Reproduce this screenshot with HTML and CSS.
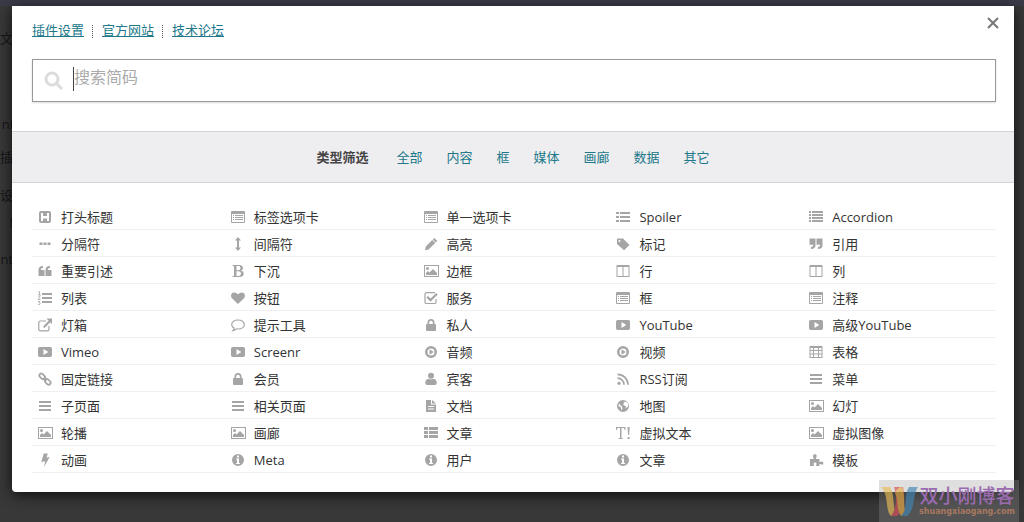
FILE: index.html
```html
<!DOCTYPE html>
<html lang="zh-CN">
<head>
<meta charset="utf-8">
<title>插入简码</title>
<link rel="stylesheet" href="styles.css">
</head>
<body>
<svg class="sprite" aria-hidden="true">
  <symbol id="i-header" viewBox="0 0 16 16"><path fill-rule="evenodd" d="M4 2h8A2 2 0 0 1 14 4v8a2 2 0 0 1-2 2H4A2 2 0 0 1 2 12V4A2 2 0 0 1 4 2zM4 4v8h2V9.500h4V12h2V4h-2v3H6V4z"/></symbol>
  <symbol id="i-listalt" viewBox="0 0 16 16"><path fill-rule="evenodd" d="M2 2h12a1 1 0 0 1 1 1v10a1 1 0 0 1-1 1H2a1 1 0 0 1-1-1V3a1 1 0 0 1 1-1zM2 5v8h12V5zM3 6h1v1H3zM5 6h8v1H5zM3 8h1v1H3zM5 8h8v1H5zM3 10h1v1H3zM5 10h8v1H5z"/></symbol>
  <symbol id="i-listul" viewBox="0 0 16 16"><path d="M1 3h3v2H1zM5 3h10v2H5zM1 7h3v2H1zM5 7h10v2H5zM1 11h3v2H1zM5 11h10v2H5z"/></symbol>
  <symbol id="i-list" viewBox="0 0 16 16"><path d="M1 2h2v2H1zM4 2h11v2H4zM1 5h2v2H1zM4 5h11v2H4zM1 8h2v2H1zM4 8h11v2H4zM1 11h2v2H1zM4 11h11v2H4z"/></symbol>
  <symbol id="i-dots" viewBox="0 0 16 16"><path d="M2.500 6.500h3v2.500h-3zM6.500 6.500h3v2.500h-3zM10.500 6.500h3v2.500h-3z"/></symbol>
  <symbol id="i-updown" viewBox="0 0 16 16"><path d="M8 1l3 3.500H9v7h2L8 15l-3-3.500h2v-7H5z"/></symbol>
  <symbol id="i-pencil" viewBox="0 0 16 16"><path d="M11.300 2l2.900 2.900-1.500 1.500-2.900-2.900zM9.200 4l3 3-6.600 6.500L2 14.200l.8-3.700z"/></symbol>
  <symbol id="i-tag" viewBox="0 0 16 16"><path fill-rule="evenodd" d="M2 2.500h6L14.500 9 9 14.200 2 8zM4.500 3.900a1 1 0 1 0 0 2 1 1 0 0 0 0-2z"/></symbol>
  <symbol id="i-quoter" viewBox="0 0 16 16"><path d="M1.500 2.500h6v6.500c0 2.500-1.500 4-4.500 4v-2c1.500 0 2.200-.6 2.200-2.200H1.500zM8.500 2.500h6v6.500c0 2.500-1.500 4-4.500 4v-2c1.500 0 2.200-.6 2.200-2.200H8.500z"/></symbol>
  <symbol id="i-quotel" viewBox="0 0 16 16"><path d="M7.500 13h-6V7c0-2.500 1.500-4 4.500-4v2c-1.500 0-2.200.6-2.200 2h3.700zM14.500 13h-6V7c0-2.500 1.500-4 4.500-4v2c-1.500 0-2.200.6-2.200 2h3.700z"/></symbol>
  <symbol id="i-bold" viewBox="0 0 16 16"><path fill-rule="evenodd" d="M2.500 2H9c2.500 0 4 1 4 3 0 1.300-.8 2.200-2.300 2.600 1.900.3 3 1.500 3 3.100 0 2.200-1.700 3.300-4.500 3.300H2.500v-.8L4 12.800V3.200l-1.500-.4zM6.500 3v4.200h1.800C9.800 7.200 10.400 6.500 10.400 5S9.800 3 8.300 3zM6.500 8.200V13h1.800c1.800 0 2.600-.8 2.600-2.400S10 8.200 8.300 8.200z"/></symbol>
  <symbol id="i-image" viewBox="0 0 16 16"><path fill-rule="evenodd" d="M1 2h15v12H1zM2 3v10h13V3zM3 12v-2l2-2 1.500 1.500L10 6l4 4v2zM4.500 4a1.500 1.500 0 1 1 0 3 1.500 1.500 0 0 1 0-3z"/></symbol>
  <symbol id="i-columns" viewBox="0 0 16 16"><path fill-rule="evenodd" d="M2 2h12a.5.5 0 0 1 .5.5v11a.5.5 0 0 1-.5.5H2a.5.5 0 0 1-.5-.5v-11A.5.5 0 0 1 2 2zM2.500 4v9h5V4zM8.500 4v9h5V4z"/></symbol>
  <symbol id="i-listol" viewBox="0 0 16 16"><path d="M5 3h10v2H5zM5 7h10v2H5zM5 11h10v2H5z"/><path fill="none" stroke="currentColor" stroke-width=".8" d="M1.500 2l1-.5V5M1 5h3M1.200 7c.5-1 2-.8 1.800.2L1 9.500h2.500M1 11.500h2L2 12.700c2 0 1.500 2.300-1 1.800"/></symbol>
  <symbol id="i-heart" viewBox="0 0 16 16"><path d="M8 14L2 8.200C.2 6.300 1 2.500 4.300 2.500 6 2.500 7.200 3.500 8 4.600c.8-1.100 2-2.100 3.700-2.100 3.300 0 4.100 3.800 2.300 5.700z"/></symbol>
  <symbol id="i-check" viewBox="0 0 16 16"><path fill="none" stroke="currentColor" stroke-width="1.200" d="M13 9v3.200a1.300 1.300 0 0 1-1.300 1.300H3.300A1.300 1.300 0 0 1 2 12.200V4a1.300 1.300 0 0 1 1.300-1.300H12"/><path fill="none" stroke="currentColor" stroke-width="2.200" d="M4.200 6.800l3.300 3.300 6.500-6.300"/></symbol>
  <symbol id="i-external" viewBox="0 0 16 16"><path fill="none" stroke="currentColor" stroke-width="1.200" d="M9 4H3.200A1.400 1.400 0 0 0 1.800 5.400v7a1.400 1.400 0 0 0 1.400 1.400h7.400a1.400 1.400 0 0 0 1.400-1.400V9"/><path d="M9.500 1.500H15V7l-1.800-1.800-5.800 5.800L6 9.600l5.700-5.800z"/></symbol>
  <symbol id="i-comment" viewBox="0 0 16 16"><path fill="none" stroke="currentColor" stroke-width="1.200" d="M8 3c3.600 0 6.300 1.900 6.300 4.500S11.600 12 8 12l-1.500-.1c-1 1-2.200 1.600-3.600 1.800.8-.8 1.200-1.600 1.200-2.600C2.600 10.300 1.700 9 1.700 7.500 1.700 4.900 4.400 3 8 3z"/></symbol>
  <symbol id="i-lock" viewBox="0 0 16 16"><path fill-rule="evenodd" d="M4.500 7V5.500a3.500 3.500 0 0 1 7 0V7h.5a1 1 0 0 1 1 1v5a1 1 0 0 1-1 1H4a1 1 0 0 1-1-1V8a1 1 0 0 1 1-1zM6.200 7h3.600V5.500a1.800 1.800 0 0 0-3.600 0z"/></symbol>
  <symbol id="i-youtube" viewBox="0 0 16 16"><path fill-rule="evenodd" d="M3 3h10c1.500 0 2 .7 2 2v6c0 1.300-.5 2-2 2H3c-1.500 0-2-.7-2-2V5c0-1.300.5-2 2-2zM6.500 5v6l4.800-3z"/></symbol>
  <symbol id="i-play" viewBox="0 0 16 16"><path fill-rule="evenodd" d="M8 2a6 6 0 1 1 0 12A6 6 0 0 1 8 2zM8 4.500a3.500 3.500 0 1 0 0 7 3.500 3.500 0 0 0 0-7zM6.500 5.200l4.300 2.800-4.300 2.800z"/></symbol>
  <symbol id="i-table" viewBox="0 0 16 16"><path fill-rule="evenodd" d="M2 2h12a.5.5 0 0 1 .5.5v10.900a.5.5 0 0 1-.5.6H2a.5.5 0 0 1-.5-.5v-11A.5.5 0 0 1 2 2zM2.500 4v2H5V4zM6 4v2h4V4zM11 4v2h2.500V4zM2.500 7v2.500H5V7zM6 7v2.500h4V7zM11 7v2.500h2.500V7zM2.500 10.500V13H5v-2.500zM6 10.500V13h4v-2.500zM11 10.500V13h2.500v-2.500z"/></symbol>
  <symbol id="i-link" viewBox="0 0 16 16"><g fill="none" stroke="currentColor" stroke-width="1.700"><rect x="2" y="3.400" width="6.400" height="4" rx="2" transform="rotate(45 5.200 5.400)"/><rect x="7.600" y="8.800" width="6.400" height="4" rx="2" transform="rotate(45 10.800 10.800)"/><path d="M6.500 6.700l3 3"/></g></symbol>
  <symbol id="i-user" viewBox="0 0 16 16"><circle cx="8" cy="4.800" r="3"/><path d="M5 8h1.500l1.500.6L9.500 8H11c2 .2 2.700 2 2.700 4 0 1.300-.7 2-1.800 2H4.100c-1.100 0-1.800-.7-1.800-2 0-2 .7-3.800 2.700-4z"/></symbol>
  <symbol id="i-rss" viewBox="0 0 16 16"><circle cx="4" cy="12.300" r="1.600"/><path fill="none" stroke="currentColor" stroke-width="1.700" d="M2.500 7.200c3.700 0 6.500 2.800 6.500 6.500M2.500 3.300C8.300 3.300 13 8 13 13.700"/></symbol>
  <symbol id="i-bars" viewBox="0 0 16 16"><path d="M2 3h12v2H2zM2 7h12v2H2zM2 11h12v2H2z"/></symbol>
  <symbol id="i-file" viewBox="0 0 16 16"><path fill-rule="evenodd" d="M3 2h5v4.500h5V14H3zM9 2l4 3.500H9zM5 8v1h6V8zM5 10.500v1h6v-1z"/></symbol>
  <symbol id="i-globe" viewBox="0 0 16 16"><path fill-rule="evenodd" d="M8 2a6 6 0 1 1 0 12A6 6 0 0 1 8 2zM8.500 3.500l1 1.500-1.500 1 1 1.500 2 .5-.5 2.500 2.500-2 .3-2.500-1.600-2zM4 5l-.5 3L6 9.500v3l1.500-2-.5-2-2-1.500z"/></symbol>
  <symbol id="i-thlist" viewBox="0 0 16 16"><path d="M1 2h4v3H1zM6 2h9v3H6zM1 6h4v3H1zM6 6h9v3H6zM1 10h4v3H1zM6 10h9v3H6z"/></symbol>
  <symbol id="i-text" viewBox="0 0 16 16"><path d="M1 2h9.500v3h-.8L9 3H6.500v10l1.500.4v.6H3.500v-.6L5 13V3H2.500l-.7 2H1zM12.500 2h2.200l-.6 8h-1zM12.600 12h2v2h-2z"/></symbol>
  <symbol id="i-bolt" viewBox="0 0 16 16"><path d="M6.800 1.500h4L9.500 5.600l3.200-.6L7 15l1.200-5.800-3.900.9z"/></symbol>
  <symbol id="i-info" viewBox="0 0 16 16"><path fill-rule="evenodd" d="M8 2a6 6 0 1 1 0 12A6 6 0 0 1 8 2zM7 3.500v2h2v-2zM6 6.500v1h1v3.500H6v1h4v-1H9V6.500z"/></symbol>
  <symbol id="i-puzzle" viewBox="0 0 16 16"><path d="M2 7h3.500C6 6 4.800 5.500 5 3.800 5.200 1.600 8.500 1.600 8.700 3.800 8.800 5.500 7.600 6 8 7h3.500v3c1 .5 1.500-.8 2.700-.5 1.500.5 1.500 2.800 0 3.300-1.200.2-1.700-1-2.700-.6V14H8c-.4-1 .6-1.300.5-2.300-.2-1.500-2.700-1.500-2.900 0C5.500 12.700 6.400 13 6 14H2z"/></symbol>
</svg>

<div class="admin-bar"></div>
<div class="underlay" aria-hidden="true">
  <span>文</span><span>ni</span><span>插</span><span>设</span><span>!</span><span>nt</span>
</div>
<main class="modal">
  <button class="close" type="button" aria-label="关闭"><svg viewBox="0 0 12 12"><path d="M1 1l10 10M11 1L1 11"/></svg></button>
  <header class="top">
    <nav class="links">
      <a href="#">插件设置</a><a href="#">官方网站</a><a href="#">技术论坛</a>
    </nav>
    <label class="search">
      <svg viewBox="0 0 20 20" aria-hidden="true"><circle cx="8" cy="8" r="6"/><path d="M12.500 12.500L18 18"/></svg>
      <input type="text" placeholder="搜索简码" aria-label="搜索简码" autofocus>
    </label>
  </header>
  <nav class="filter">
    <strong>类型筛选</strong>
    <a href="#">全部</a><a href="#">内容</a><a href="#">框</a><a href="#">媒体</a><a href="#">画廊</a><a href="#">数据</a><a href="#">其它</a>
  </nav>
  <section class="choices">
    <button type="button"><svg><use href="#i-header"/></svg>打头标题</button>
    <button type="button"><svg><use href="#i-listalt"/></svg>标签选项卡</button>
    <button type="button"><svg><use href="#i-listalt"/></svg>单一选项卡</button>
    <button type="button"><svg><use href="#i-listul"/></svg>Spoiler</button>
    <button type="button"><svg><use href="#i-list"/></svg>Accordion</button>
    <button type="button"><svg><use href="#i-dots"/></svg>分隔符</button>
    <button type="button"><svg><use href="#i-updown"/></svg>间隔符</button>
    <button type="button"><svg><use href="#i-pencil"/></svg>高亮</button>
    <button type="button"><svg><use href="#i-tag"/></svg>标记</button>
    <button type="button"><svg><use href="#i-quoter"/></svg>引用</button>
    <button type="button"><svg><use href="#i-quotel"/></svg>重要引述</button>
    <button type="button"><svg><use href="#i-bold"/></svg>下沉</button>
    <button type="button"><svg><use href="#i-image"/></svg>边框</button>
    <button type="button"><svg><use href="#i-columns"/></svg>行</button>
    <button type="button"><svg><use href="#i-columns"/></svg>列</button>
    <button type="button"><svg><use href="#i-listol"/></svg>列表</button>
    <button type="button"><svg><use href="#i-heart"/></svg>按钮</button>
    <button type="button"><svg><use href="#i-check"/></svg>服务</button>
    <button type="button"><svg><use href="#i-listalt"/></svg>框</button>
    <button type="button"><svg><use href="#i-listalt"/></svg>注释</button>
    <button type="button"><svg><use href="#i-external"/></svg>灯箱</button>
    <button type="button"><svg><use href="#i-comment"/></svg>提示工具</button>
    <button type="button"><svg><use href="#i-lock"/></svg>私人</button>
    <button type="button"><svg><use href="#i-youtube"/></svg>YouTube</button>
    <button type="button"><svg><use href="#i-youtube"/></svg>高级YouTube</button>
    <button type="button"><svg><use href="#i-youtube"/></svg>Vimeo</button>
    <button type="button"><svg><use href="#i-youtube"/></svg>Screenr</button>
    <button type="button"><svg><use href="#i-play"/></svg>音频</button>
    <button type="button"><svg><use href="#i-play"/></svg>视频</button>
    <button type="button"><svg><use href="#i-table"/></svg>表格</button>
    <button type="button"><svg><use href="#i-link"/></svg>固定链接</button>
    <button type="button"><svg><use href="#i-lock"/></svg>会员</button>
    <button type="button"><svg><use href="#i-user"/></svg>宾客</button>
    <button type="button"><svg><use href="#i-rss"/></svg>RSS订阅</button>
    <button type="button"><svg><use href="#i-bars"/></svg>菜单</button>
    <button type="button"><svg><use href="#i-bars"/></svg>子页面</button>
    <button type="button"><svg><use href="#i-bars"/></svg>相关页面</button>
    <button type="button"><svg><use href="#i-file"/></svg>文档</button>
    <button type="button"><svg><use href="#i-globe"/></svg>地图</button>
    <button type="button"><svg><use href="#i-image"/></svg>幻灯</button>
    <button type="button"><svg><use href="#i-image"/></svg>轮播</button>
    <button type="button"><svg><use href="#i-image"/></svg>画廊</button>
    <button type="button"><svg><use href="#i-thlist"/></svg>文章</button>
    <button type="button"><svg><use href="#i-text"/></svg>虚拟文本</button>
    <button type="button"><svg><use href="#i-image"/></svg>虚拟图像</button>
    <button type="button"><svg><use href="#i-bolt"/></svg>动画</button>
    <button type="button"><svg><use href="#i-info"/></svg>Meta</button>
    <button type="button"><svg><use href="#i-info"/></svg>用户</button>
    <button type="button"><svg><use href="#i-info"/></svg>文章</button>
    <button type="button"><svg><use href="#i-puzzle"/></svg>模板</button>
  </section>
</main>
<aside class="watermark">
  <svg viewBox="0 0 40 32" aria-hidden="true"><path fill="#e8bd55" d="M2 2h9c5 7 2 20 7 29h-6C6 26 10 9 2 2z"/><path fill="#d84a55" d="M15 2h9c2 10 2 22-6 29h-6c6-8 6-20 3-29z"/><path fill="#e8a840" d="M16 8c1-3 4-6 7-6 4 8 0 20 5 29h-6c-5-7-2-16-6-23z"/><path fill="#3f86b4" d="M30 2h9c-6 8-2 22-11 29h-6c8-8 2-20 8-29z"/></svg>
  <div class="mark-text"><b>双小刚博客</b><span>shuangxiaogang.com</span></div>
</aside>
</body>
</html>
```
FILE: styles.css
```css
* { box-sizing: border-box; }
body {
  margin: 0;
  min-height: 100vh;
  background: #393839;
  font: 13px/20px "Open Sans", "Noto Sans CJK SC", sans-serif;
  color: #333;
}
button, input { font: inherit; color: inherit; }
.sprite { display: none; }
.admin-bar { height: 6px; background: #3a3b47; }
.underlay {
  position: absolute;
  top: 28px;
  left: 0;
  width: 12px;
  display: grid;
  grid-template-rows: 86px 33px 38px 27px 37px 20px;
  justify-items: end;
  overflow: hidden;
  color: #161616;
}
.modal {
  position: relative;
  margin: 0 10px 30px 12px;
  padding-bottom: 19px;
  background: #fff;
  border-radius: 0 0 4px 4px;
  box-shadow: 0 3px 14px rgba(0, 0, 0, .75);
}
.close {
  position: absolute;
  top: 8px;
  right: 12px;
  width: 18px;
  height: 18px;
  padding: 3px;
  border: 0;
  background: none;
}
.close svg { display: block; width: 12px; height: 12px; fill: none; stroke: #777; stroke-width: 2; }
.top { padding: 14px 18px 29px 20px; }
.links { display: flex; margin-bottom: 19px; }
.links a { color: #21788a; line-height: 20px; }
.links a + a { position: relative; margin-left: 18px; }
.links a + a::before {
  content: "";
  position: absolute;
  left: -10px;
  top: 5px;
  height: 13px;
  border-left: 1px dotted #555;
}
.search {
  display: flex;
  align-items: center;
  height: 43px;
  padding: 0 11px;
  border: 1px solid #98989c;
  box-shadow: 0 1px 2px #ddd;
}
.search svg { width: 20px; height: 20px; fill: none; stroke: #dcdcde; stroke-width: 3; }
.search input {
  flex: 1;
  height: 24px;
  margin: 0 0 3px 9px;
  padding: 0 0 5px;
  border: 0;
  border-left: 1px solid #444;
  outline: 0;
  background: none;
  font-size: 16px;
  caret-color: transparent;
}
.search input::placeholder { color: #aaa; opacity: 1; }
.filter {
  display: flex;
  justify-content: center;
  align-items: center;
  gap: 24px;
  height: 52px;
  border: solid #d3d3d7;
  border-width: 1px 0;
  background: #eeeef0;
}
.filter strong { margin-right: 4px; color: #444; }
.filter a { color: #21788a; text-decoration: none; }
.choices {
  display: grid;
  grid-template-columns: repeat(5, 1fr);
  padding: 20px 18px 0 20px;
}
.choices button {
  display: flex;
  align-items: center;
  gap: 8px;
  height: 27px;
  padding: 2px 5px 0;
  border: 0;
  border-bottom: 1px solid #f0f0f4;
  background: none;
  text-align: left;
  white-space: nowrap;
}
.choices svg { flex: none; width: 16px; height: 16px; fill: #a5a5a5; color: #a5a5a5; }
.watermark {
  position: absolute;
  right: 5px;
  bottom: 0;
  display: flex;
  align-items: center;
  width: 140px;
  height: 42px;
  background: rgba(150, 150, 150, .3);
}
.watermark svg { flex: none; width: 40px; height: 32px; opacity: .65; }
.mark-text { display: flex; flex-direction: column; align-items: center; }
.mark-text b { font-size: 19px; line-height: 22px; font-weight: 500; color: #9a6bb0; }
.mark-text span { font: bold 8px/10px "DejaVu Sans", sans-serif; color: #a87860; }
```
